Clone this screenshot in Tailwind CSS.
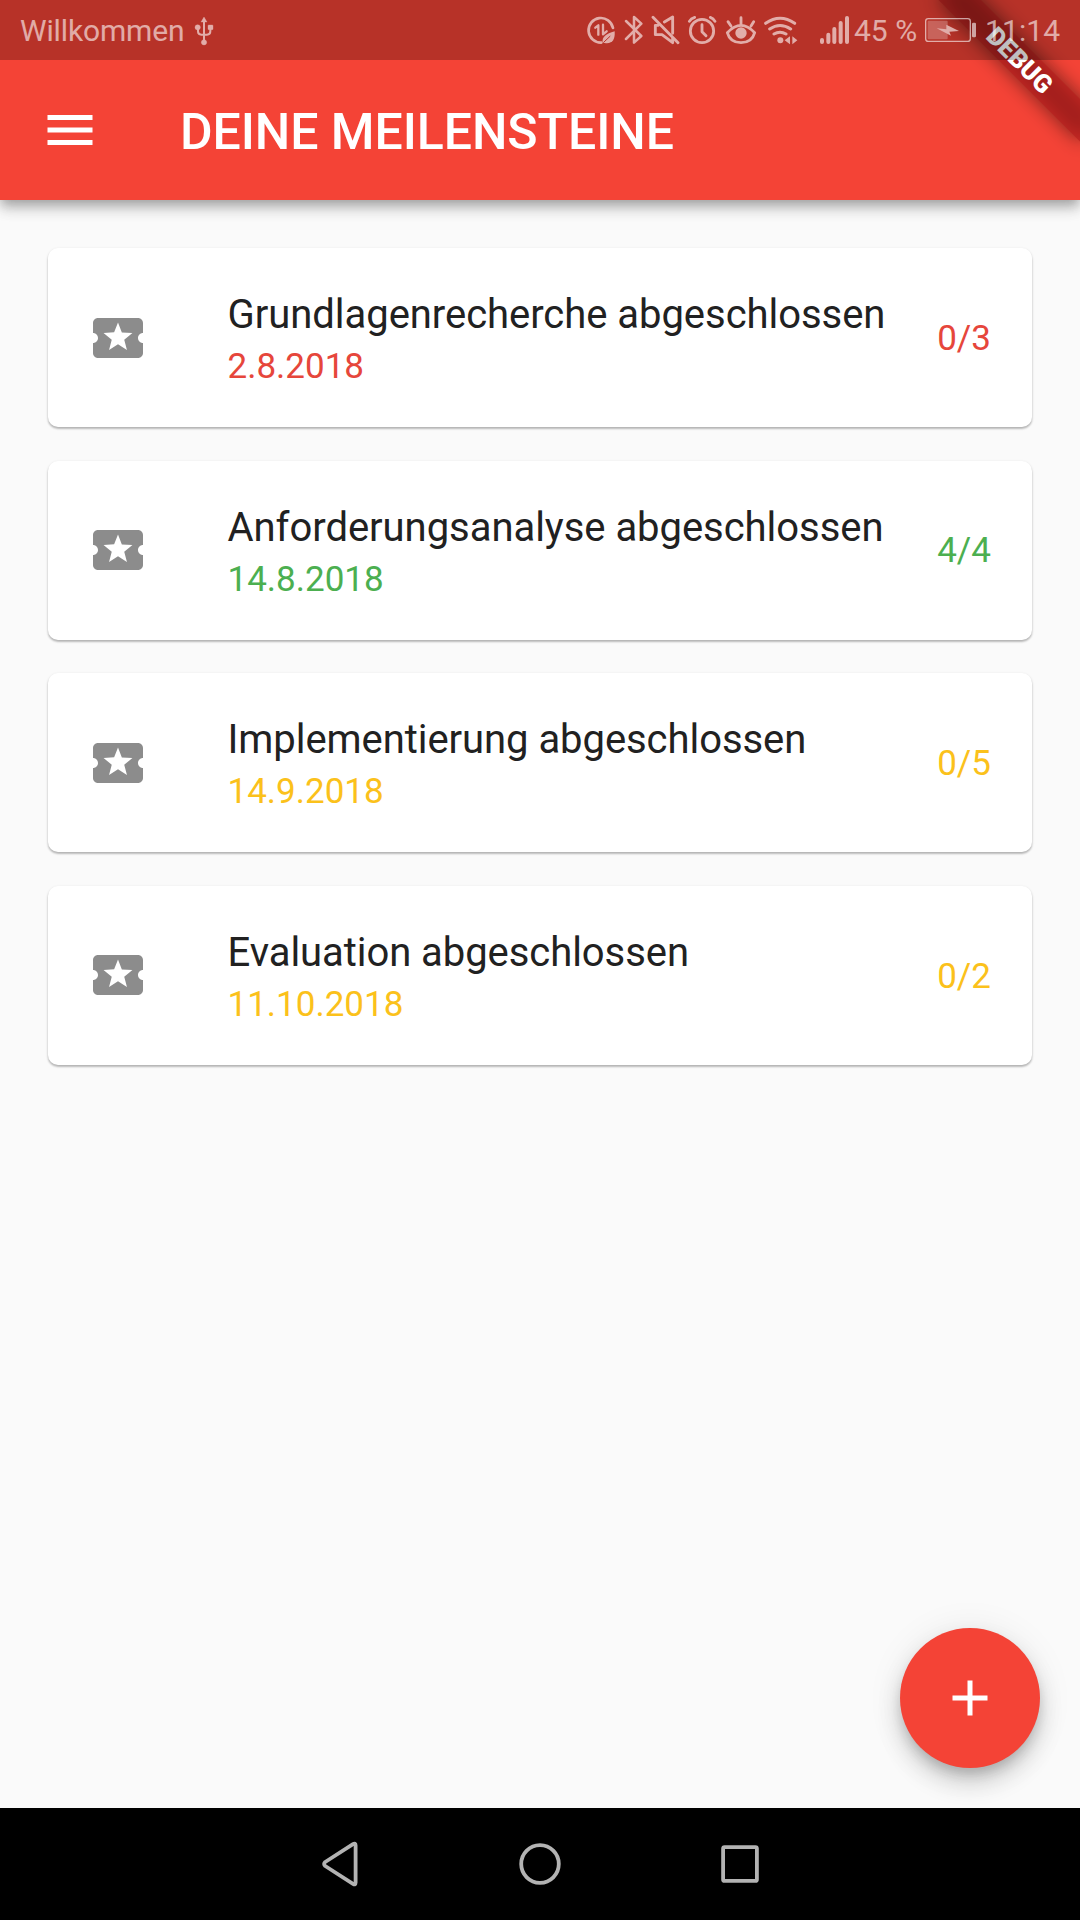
<!DOCTYPE html>
<html lang="de">
<head>
<meta charset="utf-8">
<title>Deine Meilensteine</title>
<script src="https://cdn.jsdelivr.net/npm/@tailwindcss/browser@4"></script>
</head>
<body class="bg-[#fafafa]">
<div class="relative flex h-[1920px] w-[1080px] flex-col overflow-hidden bg-[#fafafa] font-['Roboto',sans-serif]">

  <!-- App bar -->
  <header class="z-10 flex h-[200px] shrink-0 items-center bg-[#f44336] pt-[60px] pl-10 text-white shadow-[0_5px_10px_-2px_rgba(0,0,0,0.2),0_10px_12px_rgba(0,0,0,0.14),0_2px_20px_rgba(0,0,0,0.12)]">
    <svg class="size-[60px]" viewBox="0 0 24 24" fill="currentColor"><path d="M3 18h18v-2H3v2zm0-5h18v-2H3v2zm0-7v2h18V6H3z"/></svg>
    <h1 class="ml-20 pt-[3px] text-[50px] leading-[60px] font-medium tracking-[-0.06px] whitespace-nowrap">DEINE MEILENSTEINE</h1>
  </header>

  <!-- Milestones -->
  <main class="flex grow flex-col gap-[33.5px] px-12 pt-[48px]">
    <article class="flex h-[179px] items-center rounded-[10px] bg-white pr-[41px] pl-[39.500px] shadow-[0_2px_2px_rgba(0,0,0,0.2),0_1px_3px_rgba(0,0,0,0.14)]">
      <svg class="size-[60px] shrink-0 text-[#8c8c8c]" viewBox="0 0 24 24" fill="currentColor"><path d="M20 12c0-1.1.9-2 2-2V6c0-1.1-.9-2-2-2H4c-1.1 0-1.99.9-1.99 2v4c1.1 0 1.99.9 1.99 2s-.89 2-2 2v4c0 1.1.9 2 2 2h16c1.1 0 2-.9 2-2v-4c-1.1 0-2-.9-2-2zm-4.42 4.8L12 14.5l-3.58 2.3 1.08-4.12-3.29-2.69 4.24-.25L12 5.8l1.54 3.95 4.24.25-3.29 2.69 1.09 4.11z"/></svg>
      <div class="ml-20 grow pt-[2px] whitespace-nowrap">
        <h2 class="text-[40px] leading-[55px] tracking-[-0.04px] text-[#212121]">Grundlagenrecherche abgeschlossen</h2>
        <p class="text-[35px] leading-[49px] text-[#e6463b]">2.8.2018</p>
      </div>
      <span class="pt-[3px] text-[35px] text-[#e6463b]">0/3</span>
    </article>
    <article class="flex h-[179px] items-center rounded-[10px] bg-white pr-[41px] pl-[39.500px] shadow-[0_2px_2px_rgba(0,0,0,0.2),0_1px_3px_rgba(0,0,0,0.14)]">
      <svg class="size-[60px] shrink-0 text-[#8c8c8c]" viewBox="0 0 24 24" fill="currentColor"><path d="M20 12c0-1.1.9-2 2-2V6c0-1.1-.9-2-2-2H4c-1.1 0-1.99.9-1.99 2v4c1.1 0 1.99.9 1.99 2s-.89 2-2 2v4c0 1.1.9 2 2 2h16c1.1 0 2-.9 2-2v-4c-1.1 0-2-.9-2-2zm-4.42 4.8L12 14.5l-3.58 2.3 1.08-4.12-3.29-2.69 4.24-.25L12 5.8l1.54 3.95 4.24.25-3.29 2.69 1.09 4.11z"/></svg>
      <div class="ml-20 grow pt-[3px] whitespace-nowrap">
        <h2 class="text-[40px] leading-[55px] tracking-[-0.04px] text-[#212121]">Anforderungsanalyse abgeschlossen</h2>
        <p class="text-[35px] leading-[49px] text-[#4caf50]">14.8.2018</p>
      </div>
      <span class="pt-[3px] text-[35px] text-[#4caf50]">4/4</span>
    </article>
    <article class="flex h-[179px] items-center rounded-[10px] bg-white pr-[41px] pl-[39.500px] shadow-[0_2px_2px_rgba(0,0,0,0.2),0_1px_3px_rgba(0,0,0,0.14)]">
      <svg class="size-[60px] shrink-0 text-[#8c8c8c]" viewBox="0 0 24 24" fill="currentColor"><path d="M20 12c0-1.1.9-2 2-2V6c0-1.1-.9-2-2-2H4c-1.1 0-1.99.9-1.99 2v4c1.1 0 1.99.9 1.99 2s-.89 2-2 2v4c0 1.1.9 2 2 2h16c1.1 0 2-.9 2-2v-4c-1.1 0-2-.9-2-2zm-4.42 4.8L12 14.5l-3.58 2.3 1.08-4.12-3.29-2.69 4.24-.25L12 5.8l1.54 3.95 4.24.25-3.29 2.69 1.09 4.11z"/></svg>
      <div class="ml-20 grow pt-[3px] whitespace-nowrap">
        <h2 class="text-[40px] leading-[55px] tracking-[-0.06px] text-[#212121]">Implementierung abgeschlossen</h2>
        <p class="text-[35px] leading-[49px] text-[#fbc11b]">14.9.2018</p>
      </div>
      <span class="pt-[4px] text-[35px] text-[#fbc11b]">0/5</span>
    </article>
    <article class="flex h-[179px] items-center rounded-[10px] bg-white pr-[41px] pl-[39.500px] shadow-[0_2px_2px_rgba(0,0,0,0.2),0_1px_3px_rgba(0,0,0,0.14)]">
      <svg class="size-[60px] shrink-0 text-[#8c8c8c]" viewBox="0 0 24 24" fill="currentColor"><path d="M20 12c0-1.1.9-2 2-2V6c0-1.1-.9-2-2-2H4c-1.1 0-1.99.9-1.99 2v4c1.1 0 1.99.9 1.99 2s-.89 2-2 2v4c0 1.1.9 2 2 2h16c1.1 0 2-.9 2-2v-4c-1.1 0-2-.9-2-2zm-4.42 4.8L12 14.5l-3.58 2.3 1.08-4.12-3.29-2.69 4.24-.25L12 5.8l1.54 3.95 4.24.25-3.29 2.69 1.09 4.11z"/></svg>
      <div class="ml-20 grow pt-[3px] whitespace-nowrap">
        <h2 class="text-[40px] leading-[55px] tracking-[-0.06px] text-[#212121]">Evaluation abgeschlossen</h2>
        <p class="text-[35px] leading-[49px] text-[#fbc11b]">11.10.2018</p>
      </div>
      <span class="pt-[4px] text-[35px] text-[#fbc11b]">0/2</span>
    </article>
  </main>

  <!-- Floating action button -->
  <button class="absolute right-10 bottom-[152px] flex size-[140px] items-center justify-center rounded-full bg-[#f44336] text-white shadow-[0_8px_12px_-2px_rgba(0,0,0,0.16),0_15px_25px_rgba(0,0,0,0.16),0_2px_36px_rgba(0,0,0,0.08)]">
    <svg class="size-[60px]" viewBox="0 0 24 24" fill="currentColor"><path d="M19 13h-6v6h-2v-6H5v-2h6V5h2v6h6v2z"/></svg>
  </button>

  <!-- Navigation bar -->
  <nav class="z-10 flex h-28 shrink-0 items-center justify-center bg-black">
    <svg class="h-[60px] w-[200px]" viewBox="0 0 200 60" fill="none" stroke="#b3b3b3" stroke-width="3.8" stroke-linejoin="round"><path d="M115.600 11.400V48.600Q115.600 51.500 113 49.900L85.200 32Q83 30 85.200 28L113 10.100Q115.600 8.500 115.600 11.400Z"/></svg>
    <svg class="h-[60px] w-[200px]" viewBox="0 0 200 60" fill="none" stroke="#b3b3b3" stroke-width="3.8"><circle cx="100" cy="30" r="18.800"/></svg>
    <svg class="h-[60px] w-[200px]" viewBox="0 0 200 60" fill="none" stroke="#b3b3b3" stroke-width="3.8"><rect x="83.100" y="13.100" width="33.800" height="33.800" rx="1.500"/></svg>
  </nav>

  <!-- Debug ribbon -->
  <div class="absolute top-0 right-0 z-20 size-[200px] overflow-hidden">
    <div class="absolute top-[70px] left-[100px] h-[30px] w-[200px] origin-[100px_-70px] rotate-45">
      <div class="absolute inset-0 bg-black/50 blur-[9.500px]"></div>
      <div class="absolute inset-0 flex items-center justify-center bg-[#b71c1c]/63 text-[25.500px] leading-[30px] font-black text-white">DEBUG</div>
    </div>
  </div>

  <!-- Status bar -->
  <div class="absolute inset-x-0 top-0 z-30 flex h-[60px] items-center bg-black/25 text-[30px] text-white/60">
    <span class="w-[171px] pl-[20px] tracking-[-0.15px] whitespace-nowrap">Willkommen</span>
    <svg class="ml-5 h-[60px] w-[26px] opacity-60" viewBox="573 0 78 180" fill="#fff" stroke="#fff"><path d="M612 60V126M594 84V94Q594 104 604 104H621Q631 104 631 94V84" fill="none" stroke-width="6"/><path d="M612 51L621 66H603Z" stroke-width="1"/><circle cx="593" cy="82" r="8"/><rect x="624" y="75" width="15" height="14" rx="2"/><circle cx="612" cy="127" r="8"/></svg>

    <div class="ml-auto flex h-[60px] w-[494px] items-center">
      <svg class="h-[60px] w-8 opacity-60" viewBox="48 0 96 180" fill="none" stroke="#fff" stroke-width="8" stroke-linecap="round"><path d="M94 128A37 37 0 1 1 129 84"/><path d="M76 83L85 76V104M99 74V103L110 94" stroke-width="7" stroke-linejoin="round"/><path d="M98 128Q94 104 134 94Q137 134 104 129Z" fill="#fff" stroke="none"/><path d="M101 127L120 109" stroke="#b8322a" stroke-width="3"/></svg>
      <svg class="h-[60px] w-[30px] opacity-60" viewBox="144 0 90 180" fill="none" stroke="#fff" stroke-width="7.500" stroke-linejoin="round" stroke-linecap="round"><path d="M168 63L214 108L192 128V51L214 71L168 117"/></svg>
      <svg class="h-[60px] w-[34px] opacity-60" viewBox="234 0 102 180" fill="none" stroke="#fff" stroke-width="8.500" stroke-linecap="round" stroke-linejoin="round"><path d="M249 52L324 128"/><path d="M265 76H256V104H276L308 128V115M283 66L308 51V100"/></svg>
      <svg class="h-[60px] w-[39px] opacity-60" viewBox="336 0 117 180" fill="none" stroke="#fff" stroke-width="8.500" stroke-linecap="round" stroke-linejoin="round"><circle cx="396" cy="93" r="35"/><path d="M396 74V95L408 107M358 64Q363 55 374 52M435 64Q430 55 421 52"/></svg>
      <svg class="h-[60px] w-[39px] opacity-60" viewBox="453 0 117 180" fill="none" stroke="#fff" stroke-width="8.500" stroke-linecap="round" stroke-linejoin="round"><path d="M472 98Q513 54 554 98Q546 128 513 128Q480 128 472 98ZM513 53V72M474 65L483 78M551 65L543 78"/><circle cx="513" cy="99" r="17" fill="#fff" stroke="none"/></svg>
      <svg class="h-[60px] w-10 opacity-60" viewBox="570 0 120 180" fill="none" stroke="#fff" stroke-width="9" stroke-linecap="round"><path d="M587 70Q630 39 674 70M599 87Q630 66 662 87M612 102Q630 91 648 102"/><circle cx="631" cy="121" r="9" fill="#fff" stroke="none"/><path d="M644 121L660 109V133ZM667 109V133L682 121Z" fill="#fff" stroke="none"/></svg>
      <svg class="h-[60px] w-[51px] opacity-60" viewBox="0 0 153 180" fill="none" stroke="#fff" stroke-width="12" stroke-linecap="round"><path d="M66 120V126M85 104V126M103 87V126M122 69V126M141 54V126"/></svg>
      <span class="w-[71px] pl-[3px] whitespace-nowrap">45 %</span>
      <svg class="h-[60px] w-[58px] opacity-60" viewBox="366 0 174 180" fill="none" stroke="#fff"><rect x="377" y="56" width="134" height="68" rx="8" stroke-width="4"/><rect x="383" y="62" width="60" height="56" rx="3" fill="#fff" fill-opacity=".4" stroke="none"/><rect x="516" y="68" width="12" height="44" rx="4" fill="#fff" stroke="none"/><path d="M410 85L439 88V74L477 93L448 95L453 107Z" fill="#fff" stroke="none"/></svg>
      <span class="pl-[5px] tracking-[0.100px] whitespace-nowrap">11:14</span>
    </div>
  </div>
</div>
</body>
</html>
